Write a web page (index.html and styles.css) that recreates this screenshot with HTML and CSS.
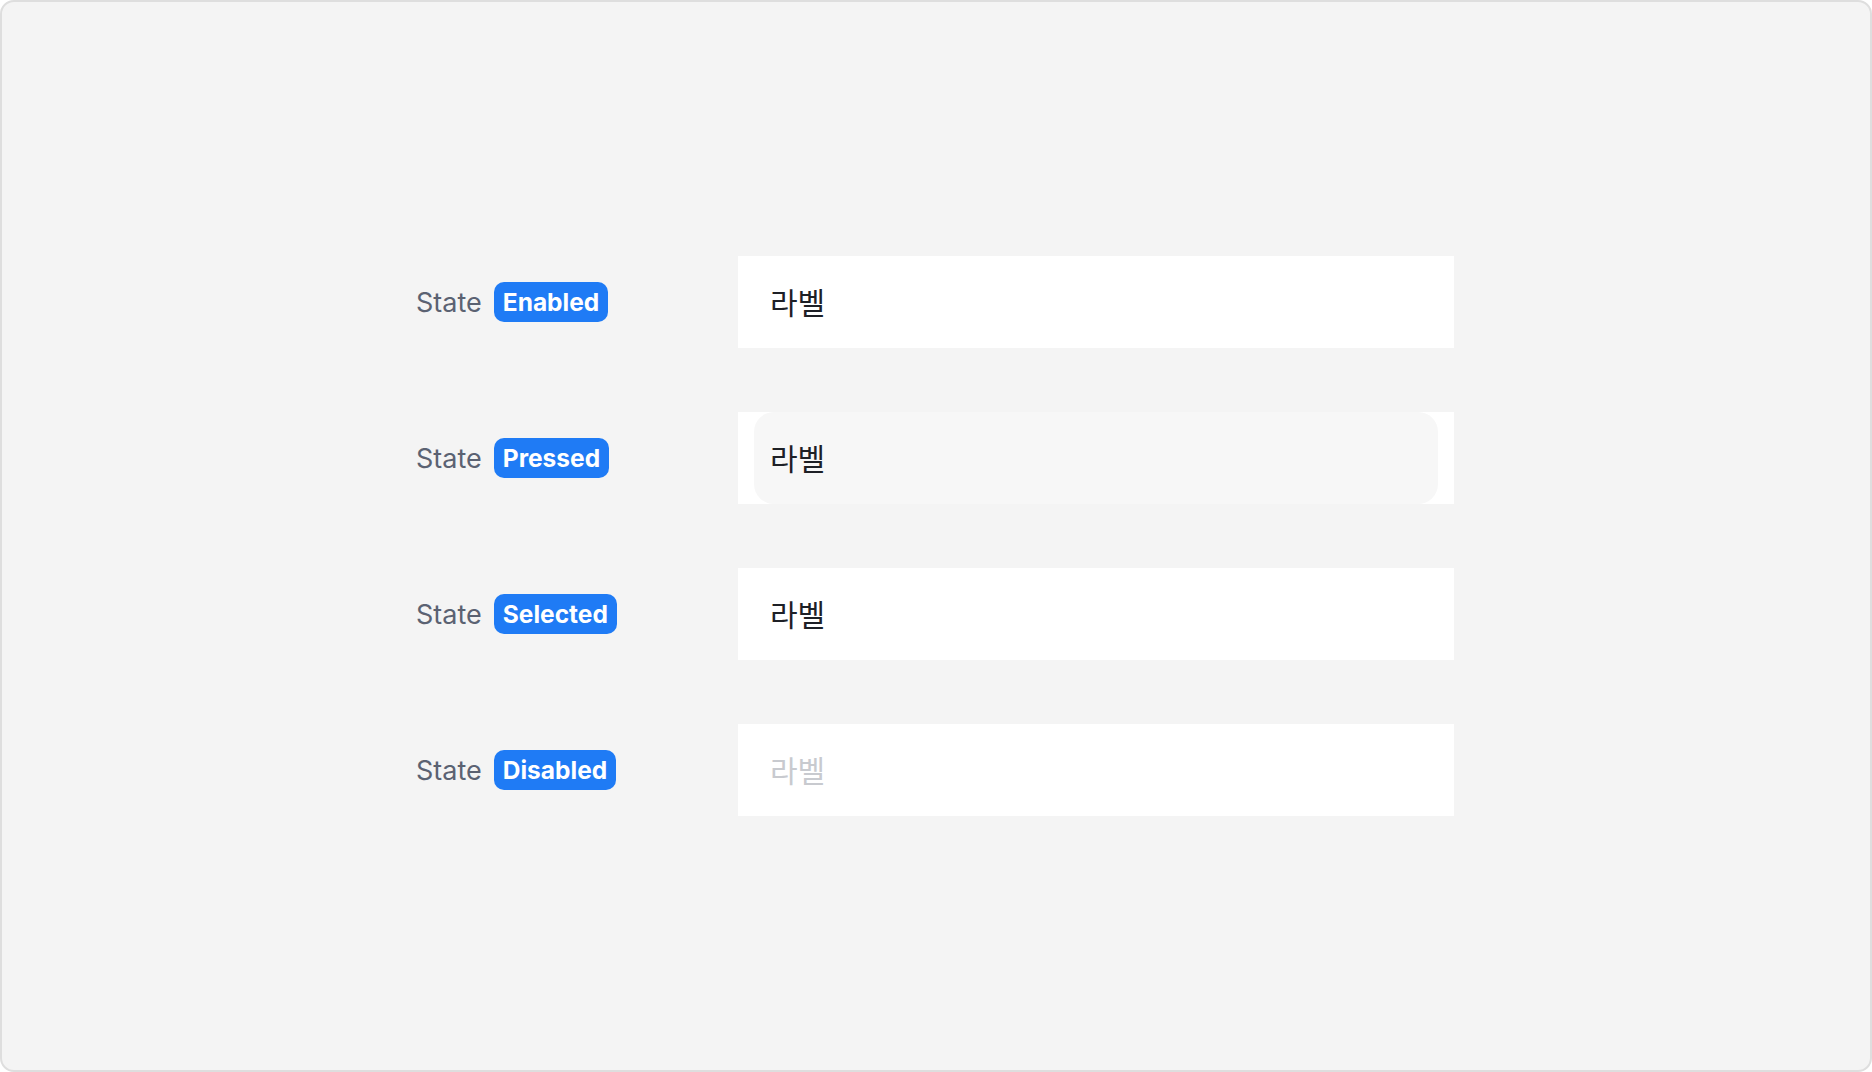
FILE: index.html
```html
<!DOCTYPE html>
<html lang="ko">
  <head>
    <meta charset="utf-8" />
    <meta name="viewport" content="width=device-width, initial-scale=1.0" />
    <title>List Item States</title>
    <link rel="stylesheet" href="styles.css">
  </head>
  <body>
    <div class="frame">
      <div class="state-grid">
        <div class="state-label">
          <span class="state-name">State</span>
          <span class="state-badge">Enabled</span>
        </div>
        <div class="list-item">
          <div class="list-item-inner">라벨</div>
        </div>

        <div class="state-label">
          <span class="state-name">State</span>
          <span class="state-badge">Pressed</span>
        </div>
        <div class="list-item pressed">
          <div class="list-item-inner">라벨</div>
        </div>

        <div class="state-label">
          <span class="state-name">State</span>
          <span class="state-badge">Selected</span>
        </div>
        <div class="list-item selected">
          <div class="list-item-inner">라벨</div>
        </div>

        <div class="state-label">
          <span class="state-name">State</span>
          <span class="state-badge">Disabled</span>
        </div>
        <div class="list-item disabled">
          <div class="list-item-inner">라벨</div>
        </div>
      </div>
    </div>
  </body>
</html>
```

FILE: styles.css
```css
html,
body {
  margin: 0;
  padding: 0;
  height: 100%;
}

body {
  font-family: Inter, "Noto Sans CJK KR", sans-serif;
  background: #ffffff;
}

.frame {
  box-sizing: border-box;
  width: 1872px;
  height: 1072px;
  border: 2px solid #dedede;
  border-radius: 14px;
  background: #f4f4f4;
  display: flex;
  align-items: center;
  justify-content: center;
}

.state-grid {
  display: grid;
  grid-template-columns: 322px 716px;
  grid-auto-rows: 92px;
  row-gap: 64px;
  margin-left: -2px;
}

.state-label {
  display: flex;
  align-items: center;
  gap: 12px;
}

.state-name {
  font-size: 27px;
  color: #5b6272;
}

.state-badge {
  background: #1f7bf5;
  color: #ffffff;
  font-weight: 700;
  font-size: 24.5px;
  line-height: 40px;
  height: 40px;
  padding: 0 9px;
  border-radius: 10px;
}

.list-item {
  background: #ffffff;
  display: flex;
}

.list-item-inner {
  flex: 1;
  display: flex;
  align-items: center;
  padding: 0 32px 3px;
  font-family: "Noto Sans CJK KR", sans-serif;
  font-size: 30px;
  color: #1e2026;
}

.list-item.pressed .list-item-inner {
  margin: 0 16px;
  padding: 0 16px 3px;
  background: #f7f7f7;
  border-radius: 20px;
}

.list-item.disabled .list-item-inner {
  color: #c8cacf;
}
```
